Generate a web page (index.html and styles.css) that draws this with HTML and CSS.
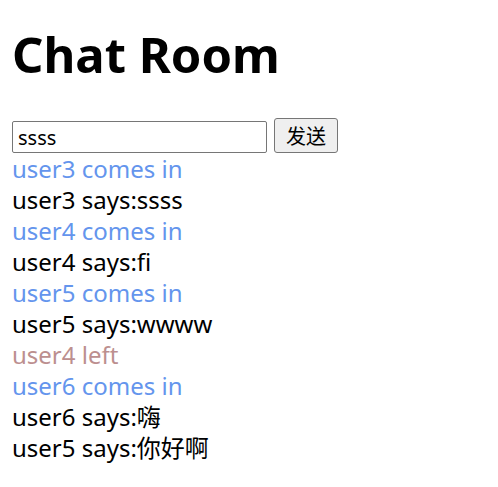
FILE: index.html
```html
<!DOCTYPE html>
<html>
<head>
<meta charset="utf-8">
<title>Chat Room</title>
<link rel="stylesheet" href="styles.css">
</head>
<body>
<h1 class="title">Chat Room</h1>
<div class="composer">
  <input class="msg-input" type="text" value="ssss">
  <button class="send-btn">发送</button>
</div>
<div class="log">
  <div class="line join">user3 comes in</div>
  <div class="line say">user3 says:ssss</div>
  <div class="line join">user4 comes in</div>
  <div class="line say">user4 says:fi</div>
  <div class="line join">user5 comes in</div>
  <div class="line say">user5 says:wwww</div>
  <div class="line leave">user4 left</div>
  <div class="line join">user6 comes in</div>
  <div class="line say">user6 says:嗨</div>
  <div class="line say">user5 says:你好啊</div>
</div>
</body>
</html>
```
FILE: styles.css
```css
html, body {
  background: #fff;
}
body {
  margin: 0;
  padding: 0 12px;
  font-family: "Noto Sans", "Noto Sans CJK SC", sans-serif;
  color: #000;
}
.title {
  font-size: 49px;
  font-weight: 700;
  margin: 22px 0 0;
  line-height: 64px;
}
.composer {
  display: flex;
  align-items: flex-end;
  gap: 7px;
  margin-top: 32px;
}
.msg-input {
  box-sizing: border-box;
  width: 255px;
  height: 32px;
  margin: 0;
  border: 1px solid #767676;
  border-radius: 2px;
  padding: 0 5px;
  font-family: "Noto Sans", sans-serif;
  font-size: 20px;
  color: #000;
}
.send-btn {
  box-sizing: border-box;
  width: 64px;
  height: 35px;
  margin: 0;
  border: 1px solid #767676;
  border-radius: 3px;
  background: #efefef;
  font-family: "Noto Sans CJK SC", sans-serif;
  font-size: 20px;
  padding: 0;
  color: #000;
}
.log {
  font-size: 24px;
  line-height: 31px;
}
.line {
  white-space: nowrap;
}
.join { color: #6495ed; }
.leave { color: #bc8f8f; }
.say { color: #000; }
```
